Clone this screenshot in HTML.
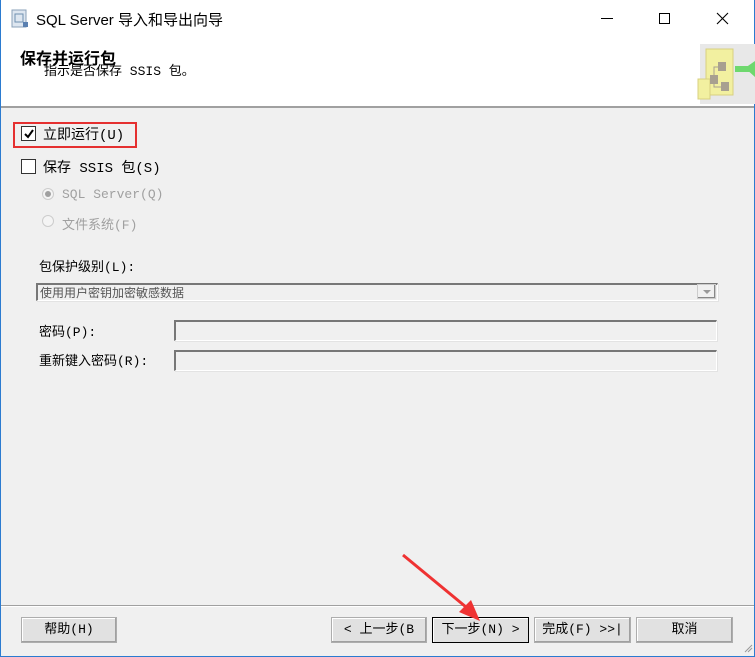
<!DOCTYPE html>
<html><head><meta charset="utf-8"><style>
*{margin:0;padding:0;box-sizing:border-box}
body{width:755px;height:657px;background:#f0f0f0;position:relative;overflow:hidden;font-family:"Liberation Mono","Noto Sans CJK SC",monospace;font-size:13px;color:#000}
.abs{position:absolute;white-space:nowrap}
.g{color:#a0a0a0}
.btn{position:absolute;top:617px;height:26px;background:#e1e1e1;border:1px solid #adadad;box-shadow:inset -1px -1px 0 #a0a0a0,inset 1px 1px 0 #fff;text-align:center;line-height:24px;font-size:13px}
.box{position:absolute;background:#f0f0f0;border-top:2px solid #777;border-left:2px solid #777;border-right:1px solid #fff;border-bottom:1px solid #fff;box-shadow:1px 1px 0 #e3e3e3}
</style></head><body>
<div class="abs" style="left:0;top:0;width:755px;height:107px;background:#fff"></div>
<div class="abs" style="left:0;top:106px;width:755px;height:2px;background:#a0a0a0"></div>
<div class="abs" style="left:0;top:0;width:1px;height:657px;background:#2b7bd0"></div>
<div class="abs" style="left:754px;top:0;width:1px;height:657px;background:#2b7bd0"></div>
<div class="abs" style="left:0;top:656px;width:755px;height:1px;background:#2b7bd0"></div>
<svg class="abs" style="left:10px;top:9px" width="20" height="20"><rect x="2" y="1" width="14" height="17" fill="#dde6f0" stroke="#8aa0b8"/><rect x="5" y="5" width="8" height="8" fill="none" stroke="#7090b0"/><rect x="13" y="13" width="5" height="5" fill="#5a80b0"/></svg>
<div class="abs" style="left:36px;top:9px;font-family:'Liberation Sans','Noto Sans CJK SC',sans-serif;font-size:15px">SQL Server 导入和导出向导</div>
<div class="abs" style="left:601px;top:18px;width:12px;height:1px;background:#000"></div>
<div class="abs" style="left:659px;top:13px;width:11px;height:11px;border:1px solid #000"></div>
<svg class="abs" style="left:716px;top:12px" width="13" height="13"><path d="M1 1L12 12M12 1L1 12" stroke="#000" stroke-width="1.1"/></svg>
<div class="abs" style="left:20px;top:45px;font-weight:bold;font-size:16px;font-family:'Liberation Sans','Noto Sans CJK SC',sans-serif">保存并运行包</div>
<div class="abs" style="left:44px;top:60px">指示是否保存 SSIS 包。</div>
<div class="abs" style="left:700px;top:44px;width:55px;height:60px;background:#e8e8e8"></div>
<svg class="abs" style="left:695px;top:44px" width="60" height="60"><polygon points="50,24 60,17 60,33" fill="#6ed86e"/><rect x="40" y="22" width="15" height="6" fill="#6ed86e"/><rect x="11" y="5" width="27" height="46" fill="#f2f0a0" stroke="#d8d080"/><rect x="3" y="35" width="12" height="20" fill="#f2f0a0" stroke="#d8d080"/><rect x="23" y="18" width="8" height="9" fill="#a8a090"/><rect x="15" y="31" width="8" height="9" fill="#a8a090"/><rect x="26" y="38" width="8" height="9" fill="#a8a090"/><path d="M19 31V23H23M19 40V43H26" stroke="#a8a090" fill="none"/></svg>
<div class="abs" style="left:13px;top:122px;width:124px;height:26px;border:2px solid #e53030"></div>
<div class="abs" style="left:21px;top:126px;width:15px;height:15px;background:#fff;border:1px solid #333"></div>
<svg class="abs" style="left:23px;top:128px" width="12" height="12"><path d="M2 6L5 9L10 2" stroke="#000" stroke-width="2" fill="none"/></svg>
<div class="abs" style="left:43px;top:124px;font-size:14px">立即运行(U)</div>
<div class="abs" style="left:21px;top:159px;width:15px;height:15px;background:#fff;border:1px solid #333"></div>
<div class="abs" style="left:43px;top:157px;font-size:14px">保存 SSIS 包(S)</div>
<div class="abs" style="left:42px;top:188px;width:12px;height:12px;border-radius:50%;background:#f4f4f4;border:1px solid #ccc"></div>
<div class="abs" style="left:45px;top:191px;width:6px;height:6px;border-radius:50%;background:#a0a0a0"></div>
<div class="abs g" style="left:62px;top:187px">SQL Server(Q)</div>
<div class="abs" style="left:42px;top:215px;width:12px;height:12px;border-radius:50%;background:#f4f4f4;border:1px solid #ccc"></div>
<div class="abs g" style="left:62px;top:214px">文件系统(F)</div>
<div class="abs" style="left:39px;top:256px">包保护级别(L):</div>
<div class="box" style="left:36px;top:283px;width:682px;height:18px"></div>
<div class="abs" style="left:40px;top:284px;font-size:12px;color:#555;font-family:'Liberation Sans','Noto Sans CJK SC',sans-serif">使用用户密钥加密敏感数据</div>
<div class="abs" style="left:697px;top:284px;width:19px;height:15px;background:#f0f0f0;border:1px solid #ccc;box-shadow:inset -1px -1px 0 #888"></div>
<div class="abs" style="left:703px;top:290px;border-left:4px solid transparent;border-right:4px solid transparent;border-top:4px solid #999"></div>
<div class="abs" style="left:39px;top:321px">密码(P):</div>
<div class="box" style="left:174px;top:320px;width:543px;height:21px"></div>
<div class="abs" style="left:39px;top:350px">重新键入密码(R):</div>
<div class="box" style="left:174px;top:350px;width:543px;height:21px"></div>
<div class="abs" style="left:1px;top:605px;width:753px;height:1px;background:#a0a0a0"></div>
<div class="abs" style="left:1px;top:606px;width:753px;height:1px;background:#fff"></div>
<div class="btn" style="left:21px;width:96px">帮助(H)</div>
<div class="btn" style="left:331px;width:96px">&lt; 上一步(B</div>
<div class="btn" style="left:432px;width:97px;border:1px solid #000;box-shadow:inset 1px 1px 0 #fff">下一步(N) &gt;</div>
<div class="btn" style="left:534px;width:97px">完成(F) &gt;&gt;|</div>
<div class="btn" style="left:636px;width:97px">取消</div>
<svg class="abs" style="left:0;top:0" width="755" height="657"><path d="M403 555L466 607" stroke="#ef3232" stroke-width="3"/><polygon points="480,621 459,612 471,600" fill="#ef3232"/><path d="M745 652L752 645M748 652L752 648" stroke="#999"/></svg>
</body></html>
